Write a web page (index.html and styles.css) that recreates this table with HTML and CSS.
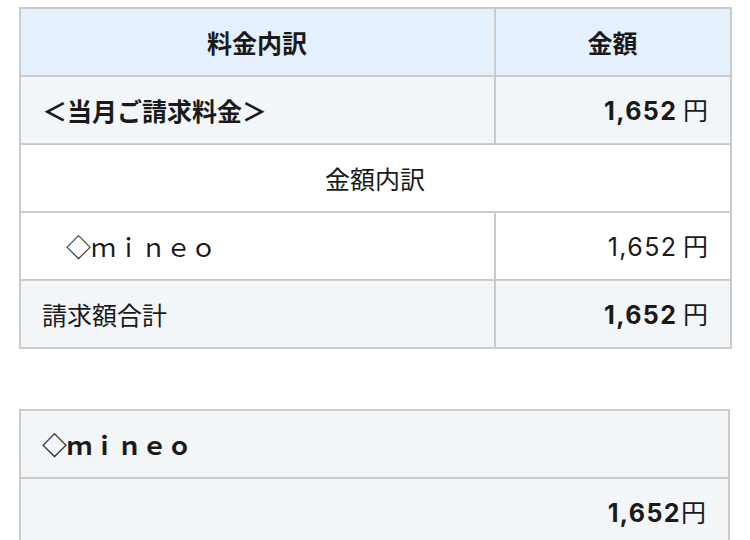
FILE: index.html
```html
<!DOCTYPE html>
<html lang="ja">
<head>
<meta charset="utf-8">
<title>料金内訳</title>
<link rel="stylesheet" href="styles.css">
</head>
<body>
<table class="bill">
  <colgroup><col class="col-name"><col class="col-amount"></colgroup>
  <tr class="head">
    <th>料金内訳</th>
    <th>金額</th>
  </tr>
  <tr class="shade">
    <td class="strong">＜当月ご請求料金＞</td>
    <td class="num"><b class="fig">1,652</b> 円</td>
  </tr>
  <tr>
    <td class="center" colspan="2">金額内訳</td>
  </tr>
  <tr>
    <td class="indent">◇ｍｉｎｅｏ</td>
    <td class="num"><span class="fig">1,652</span> 円</td>
  </tr>
  <tr class="shade">
    <td>請求額合計</td>
    <td class="num"><b class="fig">1,652</b> 円</td>
  </tr>
</table>

<table class="bill second">
  <tr class="shade">
    <td class="strong">◇ｍｉｎｅｏ</td>
  </tr>
  <tr class="shade">
    <td class="num"><b class="fig">1,652</b>円</td>
  </tr>
</table>
</body>
</html>
```
FILE: styles.css
```css
html, body {
  margin: 0;
  padding: 0;
  background: #ffffff;
}
body {
  padding: 7px 20px 0 19px;
  font-family: "Noto Sans CJK JP", "Noto Sans", sans-serif;
  color: #1a1a1a;
  font-size: 25px;
}
.bill {
  width: 711px;
  border-collapse: collapse;
  table-layout: fixed;
}
.col-name { width: 475px; }
.col-amount { width: 236px; }
.bill th,
.bill td {
  border: 2px solid #cbcbcb;
  height: 68px;
  padding: 0 22px 0 21px;
  box-sizing: border-box;
  line-height: 1;
  vertical-align: middle;
  text-align: left;
  font-weight: 400;
}
.bill .head th {
  background: #e4f0fc;
  font-weight: 700;
  text-align: center;
}
.shade td { background: #f2f6f9; }
.strong { font-weight: 700 !important; }
.num { text-align: right !important; }
.fig {
  font-family: Inter, "Noto Sans", sans-serif;
  font-size: 25px;
  letter-spacing: 1.4px;
}
b.fig { font-weight: 700; }
.center { text-align: center !important; }
.indent { padding-left: 45px !important; }
.second { margin-top: 60px; }
```
